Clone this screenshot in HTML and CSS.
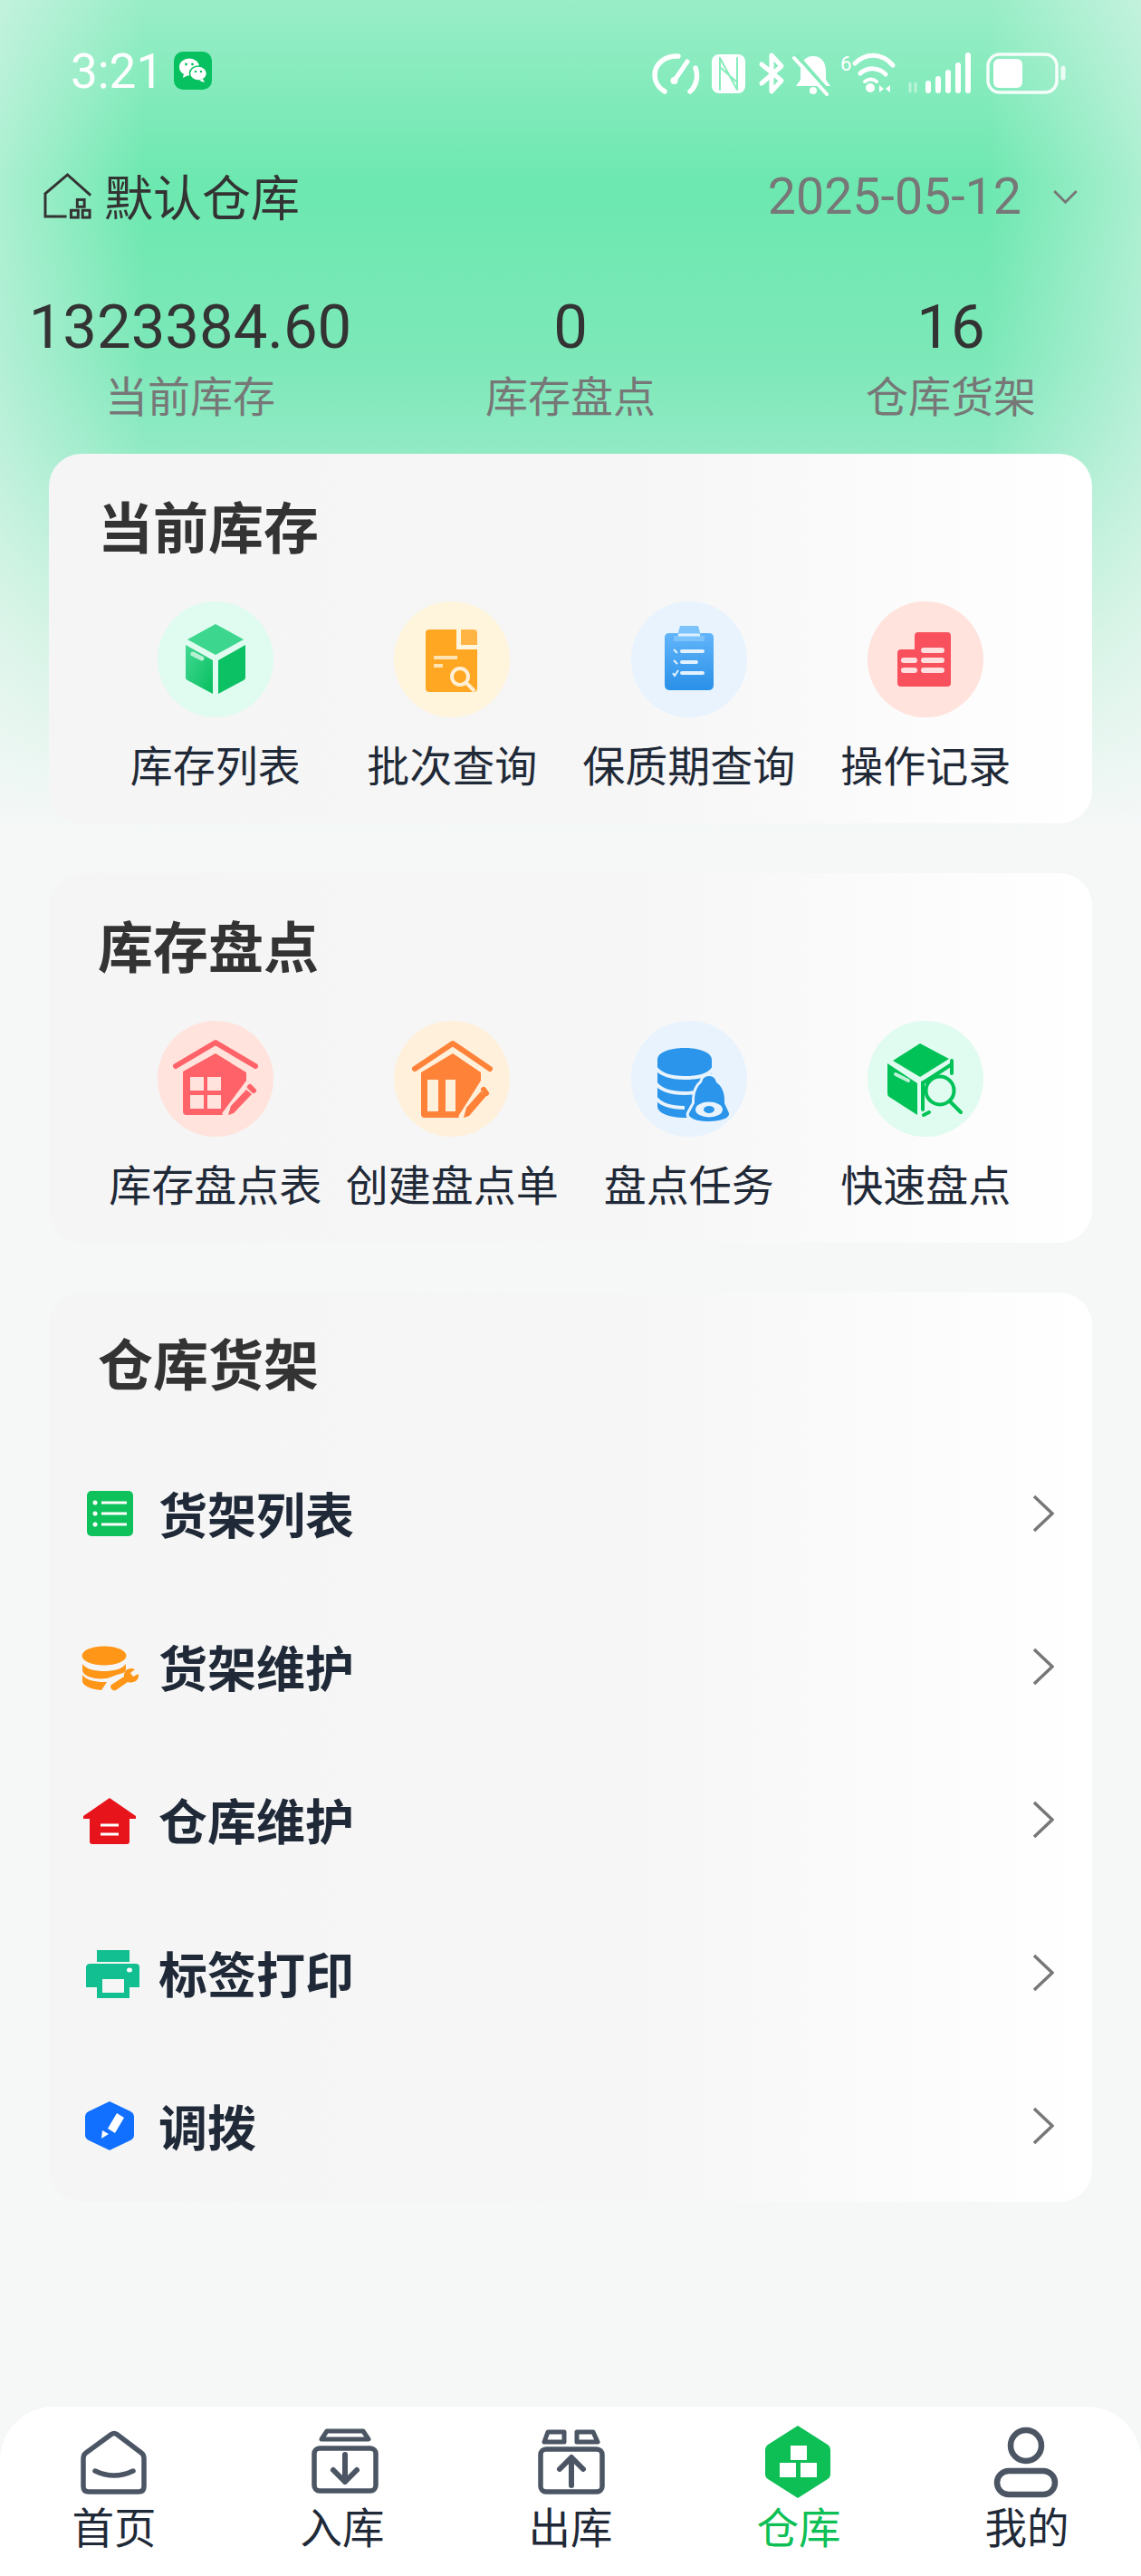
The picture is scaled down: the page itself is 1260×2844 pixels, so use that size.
FILE: index.html
```html
<!DOCTYPE html>
<html lang="zh-CN">
<head>
    <meta charset="UTF-8">
    <title>仓库</title>
    <link rel="stylesheet" href="styles.css">
</head>
<body>
<div class="page">
    <div class="status">
        <div class="status-left">
            <span class="time">3:21</span>
            <svg class="wechat" viewBox="0 0 42 42">
                <rect width="42" height="42" rx="10" fill="#07c160"/>
                <ellipse cx="17" cy="17" rx="11" ry="9.5" fill="#fff"/>
                <path d="M11 24l-1 5 6-3z" fill="#fff"/>
                <ellipse cx="27" cy="24" rx="9.5" ry="8" fill="#fff" stroke="#07c160" stroke-width="1.5"/>
                <path d="M32 30l2 4-6-2z" fill="#fff"/>
                <circle cx="13.5" cy="14" r="1.4" fill="#07c160"/><circle cx="20.5" cy="14" r="1.4" fill="#07c160"/>
                <circle cx="24" cy="22" r="1.2" fill="#07c160"/><circle cx="30" cy="22" r="1.2" fill="#07c160"/>
            </svg>
        </div>
        <svg class="status-icons" viewBox="0 0 460 50" fill="none" stroke="#fff" stroke-linecap="round" stroke-linejoin="round">
            <path d="M14 45C7 41 3 34 3 27 3 15 14 5 29 6M48 19c3 8 2 19-6 26" stroke-width="5.5"/>
            <path d="M39 12L26 31" stroke-width="5"/><circle cx="24.5" cy="33" r="4" fill="#fff" stroke="none"/>
            <rect x="66" y="4" width="37" height="43" rx="8" fill="#fff" stroke="none"/>
            <path d="M75 8v35M75 8l19 35M94 8v35M75 18l19 17" stroke="#86ecbb" stroke-width="2"/>
            <path d="M121 15l22 18-11 12V5l11 12-22 19" stroke-width="5"/>
            <path d="M178 6c-10 0-14 8-14 16v10l-5 7h38l-5-7V22c0-8-4-16-14-16z" fill="#fff" stroke="none"/>
            <circle cx="178" cy="44" r="4" fill="#fff" stroke="none"/>
            <path d="M160 5l36 41" stroke="#82ebb9" stroke-width="4"/>
            <path d="M157 8l36 40" stroke-width="4"/>
            <text class="wifi-six" x="208" y="22">6</text>
            <path d="M224 14c12-12 30-12 42 2" stroke-width="5"/>
            <path d="M230 25c8-7 20-7 28 1" stroke-width="5"/>
            <path d="M235 34c4-3 9-3 13 0" stroke-width="4"/>
            <circle cx="241" cy="41" r="5" fill="#fff" stroke="none"/>
            <path d="M251 38l5 4-5 4zM263 38l-5 4 5 4z" fill="#fff" stroke="none"/>
            <path d="M285 36v9M291 36v9" stroke-width="3" opacity=".45"/>
            <path d="M305 36v8M316 31v13M327 24v20M338 16v28M349 5v39" stroke-width="6"/>
            <rect x="371" y="4" width="76" height="42" rx="13" stroke-width="3.5" opacity=".9"/>
            <rect x="377" y="9" width="32" height="32" rx="6" fill="#fff" stroke="none"/>
            <path d="M454 19v11" stroke-width="5" opacity=".8"/>
        </svg>
    </div>

    <div class="topbar">
        <div class="store">
            <svg class="store-icon" viewBox="0 0 58 54" fill="none" stroke="#333" stroke-width="3">
                <path d="M2 24L28 2l26 23M3 24v25h24"/>
                <rect x="39" y="30" width="8" height="8"/>
                <rect x="32" y="42" width="8" height="8"/>
                <rect x="45" y="42" width="8" height="8"/>
            </svg>
            <span class="store-name">默认仓库</span>
        </div>
        <div class="date">
            <span>2025-05-12</span>
            <svg class="date-arrow" viewBox="0 0 30 18" fill="none" stroke="#777" stroke-width="3"><path d="M2 2l13 13L28 2"/></svg>
        </div>
    </div>

    <div class="stats">
        <div class="stat"><div class="stat-num">1323384.60</div><div class="stat-label">当前库存</div></div>
        <div class="stat"><div class="stat-num">0</div><div class="stat-label">库存盘点</div></div>
        <div class="stat"><div class="stat-num">16</div><div class="stat-label">仓库货架</div></div>
    </div>

    <div class="cards">
        <section class="card">
            <h2 class="card-title">当前库存</h2>
            <div class="grid">
                <div class="tile">
                    <div class="circle c-green">
                        <svg viewBox="0 2 128 128">
                            <defs>
                                <linearGradient id="gbox" x1="0" y1="0" x2="1" y2="1"><stop offset="0" stop-color="#43d893"/><stop offset="1" stop-color="#06bf5e"/></linearGradient>
                            </defs>
                            <path d="M64 27l31 17-31 17-31-17z" fill="#3dd68e"/>
                            <path d="M31 50l30 17v37L33 89q-2-1-2-3z" fill="url(#gbox)"/>
                            <path d="M97 50L67 67v37l28-15q2-1 2-3z" fill="#0bc163"/>
                            <path d="M39 60l10 5" stroke="#b9f0d3" stroke-width="5" stroke-linecap="round"/>
                        </svg>
                    </div>
                    <span class="tile-label">库存列表</span>
                </div>
                <div class="tile">
                    <div class="circle c-yellow">
                        <svg viewBox="0 2 128 128">
                            <path d="M39 33h30v22h23v43q0 4-4 4H39q-4 0-4-4V37q0-4 4-4z" fill="#ffa723"/>
                            <path d="M74 33h14q4 0 4 4v13H74z" fill="#ffb444"/>
                            <path d="M44 64h26M44 73h10" stroke="#ffe3b0" stroke-width="4"/>
                            <circle cx="73" cy="85" r="9" fill="none" stroke="#fff0d6" stroke-width="4"/>
                            <path d="M80 92l9 9" stroke="#fff0d6" stroke-width="4"/>
                        </svg>
                    </div>
                    <span class="tile-label">批次查询</span>
                </div>
                <div class="tile">
                    <div class="circle c-blue">
                        <svg viewBox="0 2 128 128">
                            <defs>
                                <linearGradient id="bclip" x1="0" y1="0" x2="0" y2="1"><stop offset="0" stop-color="#62b5fa"/><stop offset="1" stop-color="#2a90e8"/></linearGradient>
                            </defs>
                            <path d="M42 37h44q5 0 5 5v52q0 6-6 6H43q-6 0-6-6V42q0-5 5-5z" fill="url(#bclip)"/>
                            <path d="M54 29h20l3 11h4v6H47v-6h4z" fill="#7cc2fb"/>
                            <path d="M52 39h24" stroke="#dff0ff" stroke-width="3"/>
                            <path d="M56 57h23M56 69h16M56 81h23" stroke="#e4f2ff" stroke-width="4" stroke-linecap="round"/>
                            <path d="M47 55l4 4M47 67l4 4M46 81l2 3 4-6" stroke="#e4f2ff" stroke-width="2" fill="none"/>
                        </svg>
                    </div>
                    <span class="tile-label">保质期查询</span>
                </div>
                <div class="tile">
                    <div class="circle c-red">
                        <svg viewBox="0 2 128 128">
                            <path d="M56 36h32q4 0 4 4v52q0 4-4 4H37q-4 0-4-4V59q0-4 4-4h15V40q0-4 4-4z" fill="#f8505c"/>
                            <path d="M62 56h20M62 67h20M62 78h20M40 67h12M40 78h12" stroke="#ffdfe0" stroke-width="6" stroke-linecap="round"/>
                        </svg>
                    </div>
                    <span class="tile-label">操作记录</span>
                </div>
            </div>
        </section>

        <section class="card">
            <h2 class="card-title">库存盘点</h2>
            <div class="grid">
                <div class="tile">
                    <div class="circle c-red">
                        <svg viewBox="0 0 128 128">
                            <path d="M20 50L64 24l44 26" fill="none" stroke="#ff6369" stroke-width="6" stroke-linecap="round" stroke-linejoin="round"/>
                            <path d="M64 36l34 21v9L72 101q-1 2 0 3H32q-4 0-4-4V56z" fill="#ff6369"/>
                            <path d="M36 62h15v15H36zM55 62h15v15H55zM36 82h15v15H36zM55 82h15v15H55z" fill="#ffe3dc"/>
                            <path d="M78 104l3-10 17-18 6 5-20 21z" fill="#ff6369"/>
                            <path d="M102 73l4 4" stroke="#ff6369" stroke-width="6" stroke-linecap="round"/>
                        </svg>
                    </div>
                    <span class="tile-label">库存盘点表</span>
                </div>
                <div class="tile">
                    <div class="circle c-orange">
                        <svg viewBox="0 0 128 128">
                            <path d="M23 53L65 25l41 28" fill="none" stroke="#ff8239" stroke-width="6" stroke-linecap="round" stroke-linejoin="round"/>
                            <path d="M65 36l31 21v9L72 104q-1 2 0 3H34q-4 0-4-4V57z" fill="#ff8239"/>
                            <path d="M37 65h12v35H37zM57 65h11v35H57z" fill="#fff0dc"/>
                            <path d="M77 107l3-11 16-18 6 5-19 22z" fill="#ff8239"/>
                            <path d="M99 76l3 4" stroke="#ff8239" stroke-width="6" stroke-linecap="round"/>
                        </svg>
                    </div>
                    <span class="tile-label">创建盘点单</span>
                </div>
                <div class="tile">
                    <div class="circle c-blue">
                        <svg viewBox="0 0 128 128" fill="#2a95ea">
                            <path d="M29 43c0-8 13-13 30-13s30 5 30 13v64H59c-17 0-30-5-30-13z"/>
                            <path d="M27 52c7 9 20 11 32 11s27-2 32-11M27 69c7 9 20 11 32 11 6 0 12-1 16-2M27 85c7 9 20 11 32 11" fill="none" stroke="#e8f3fd" stroke-width="4"/>
                            <path d="M86 61c5 0 7 3 8 7 6 4 9 11 9 20v3l5 11c1 5-8 9-22 9s-24-4-22-9l6-11v-3c0-9 3-16 8-20 1-4 3-7 8-7z" stroke="#e8f3fd" stroke-width="6" paint-order="stroke"/>
                            <ellipse cx="86" cy="98" rx="15" ry="8.5" fill="#e8f3fd"/>
                            <ellipse cx="86" cy="98" rx="6" ry="4"/>
                        </svg>
                    </div>
                    <span class="tile-label">盘点任务</span>
                </div>
                <div class="tile">
                    <div class="circle c-green">
                        <svg viewBox="0 0 128 128">
                            <path d="M58 25l32 17-32 20-30-18z" fill="#00c257"/>
                            <path d="M22 47l33 22v35L24 84q-2-1-2-4z" fill="#00c257"/>
                            <path d="M62 68l31-20M93 44v14M61 68v30M62 104l6-3" fill="none" stroke="#00c257" stroke-width="4" stroke-linecap="round"/>
                            <path d="M31 59l14 7" stroke="#bdf2d6" stroke-width="4" stroke-linecap="round"/>
                            <circle cx="80" cy="77" r="15.5" fill="#e0fbef" stroke="#00c257" stroke-width="4"/>
                            <path d="M91 89l12 12" stroke="#00c257" stroke-width="4" stroke-linecap="round"/>
                        </svg>
                    </div>
                    <span class="tile-label">快速盘点</span>
                </div>
            </div>
        </section>

        <section class="card card-list">
            <h2 class="card-title">仓库货架</h2>
            <div class="row">
                <svg class="row-icon" viewBox="0 0 64 60">
                    <rect x="6" y="5" width="51" height="50" rx="5" fill="#0fc15a"/>
                    <path d="M22 18h28M22 30h28M22 42h28" stroke="#fff" stroke-width="3"/>
                    <circle cx="15" cy="18" r="2.5" fill="#fff"/><circle cx="15" cy="30" r="2.5" fill="#fff"/><circle cx="15" cy="42" r="2.5" fill="#fff"/>
                </svg>
                <span class="row-text">货架列表</span>
                <svg class="row-arrow" viewBox="0 0 24 42" fill="none" stroke="#777" stroke-width="3.5"><path d="M2 2l20 19L2 40"/></svg>
            </div>
            <div class="row">
                <svg class="row-icon" viewBox="0 0 64 60" fill="#ff9617">
                    <ellipse cx="25" cy="18" rx="24.5" ry="10.5"/>
                    <path d="M1 27c4 6 14 8 24 8s20-2 24-8v6c0 2-2 4-6 5-5 1-11 4-15 5-14 2-27-3-27-9z"/>
                    <path d="M1 39c4 6 14 8 24 8h3l-6 9C10 55 1 51 1 46z"/>
                    <path d="M33 50l14-9c-1-6 5-11 12-8l-5 4 3 4 6-3c1 7-5 11-12 9L38 56c-3 2-8-3-5-6z"/>
                </svg>
                <span class="row-text">货架维护</span>
                <svg class="row-arrow" viewBox="0 0 24 42" fill="none" stroke="#777" stroke-width="3.5"><path d="M2 2l20 19L2 40"/></svg>
            </div>
            <div class="row">
                <svg class="row-icon" viewBox="0 0 64 60">
                    <path d="M31 6l29 20v3H2v-3z" fill="#e8141c"/>
                    <path d="M9 27h44v27q0 3-3 3H12q-3 0-3-3z" fill="#e8141c"/>
                    <path d="M21 36h20M21 46h20" stroke="#fff" stroke-width="3"/>
                </svg>
                <span class="row-text">仓库维护</span>
                <svg class="row-arrow" viewBox="0 0 24 42" fill="none" stroke="#777" stroke-width="3.5"><path d="M2 2l20 19L2 40"/></svg>
            </div>
            <div class="row">
                <svg class="row-icon" viewBox="0 0 64 60" fill="#12bf90">
                    <path d="M17 5h36v13H17z"/>
                    <path d="M10 20h50q4 0 4 4v22H53v12H17V46H5V24q0-4 5-4z"/>
                    <rect x="23" y="37" width="24" height="15" fill="#f6f6f6"/>
                    <ellipse cx="53" cy="27" rx="3" ry="2.5" fill="#fff"/>
                </svg>
                <span class="row-text">标签打印</span>
                <svg class="row-arrow" viewBox="0 0 24 42" fill="none" stroke="#777" stroke-width="3.5"><path d="M2 2l20 19L2 40"/></svg>
            </div>
            <div class="row">
                <svg class="row-icon" viewBox="0 0 64 60">
                    <path d="M31 3l23 11q4 2 4 6v20q0 4-4 6L31 57 8 46q-4-2-4-6V20q0-4 4-6z" fill="#1170ff"/>
                    <path d="M29 33l10-17 8 5-10 17z" fill="#fff"/>
                    <path d="M23 35l7 4-8 5z" fill="#fff"/>
                </svg>
                <span class="row-text">调拨</span>
                <svg class="row-arrow" viewBox="0 0 24 42" fill="none" stroke="#777" stroke-width="3.5"><path d="M2 2l20 19L2 40"/></svg>
            </div>
        </section>
    </div>

    <nav class="nav">
        <div class="nav-item">
            <svg viewBox="0 0 80 80" fill="none" stroke="#4b5563" stroke-width="5.5">
                <path d="M37 9.5L9 30q-3 2-3 6v31q0 6 6 6h55q6 0 6-6V36q0-4-3-6L43 9.5q-3-2-6 0z"/>
                <path d="M19 50q21 10 42 0" stroke-linecap="round"/>
            </svg>
            <span>首页</span>
        </div>
        <div class="nav-item">
            <svg viewBox="0 0 80 80" fill="none" stroke="#4b5563" stroke-width="5" stroke-linecap="round" stroke-linejoin="round">
                <path d="M23 6h40l6 9H17z"/>
                <rect x="9" y="25" width="68" height="47" rx="6" stroke-width="5.5"/>
                <path d="M43 32v30M30 49l13 13 13-13" stroke-width="6"/>
            </svg>
            <span>入库</span>
        </div>
        <div class="nav-item">
            <svg viewBox="0 0 80 80" fill="none" stroke="#4b5563" stroke-width="5" stroke-linecap="round" stroke-linejoin="round">
                <path d="M15 7h18v11H11zM47 7h18l5 11H47z"/>
                <rect x="7" y="26" width="68" height="47" rx="6" stroke-width="5.5"/>
                <path d="M41 66V36M28 48l13-13 13 13" stroke-width="6"/>
            </svg>
            <span>出库</span>
        </div>
        <div class="nav-item active">
            <svg viewBox="0 0 80 80">
                <path d="M39 0l33 21q3 2 3 5v28q0 3-3 5L39 80 6 59q-3-2-3-5V26q0-3 3-5z" fill="#0dbf55"/>
                <path d="M31 22h18v16H31zM19 41h18v16H19zM42 41h18v16H42z" fill="#fff"/>
            </svg>
            <span>仓库</span>
        </div>
        <div class="nav-item">
            <svg viewBox="0 0 80 80" fill="none" stroke="#4b5563" stroke-width="6.5">
                <circle cx="39" cy="22" r="17"/>
                <rect x="7" y="50" width="64" height="26" rx="13"/>
            </svg>
            <span>我的</span>
        </div>
    </nav>
</div>
</body>
</html>
```
FILE: styles.css
```css
* {
    box-sizing: border-box;
}
body {
    margin: 0;
    font-family: "Noto Sans CJK SC", "Noto Sans", sans-serif;
}
.page {
    width: 1260px;
    height: 2844px;
    overflow: hidden;
    display: flex;
    flex-direction: column;
    background-color: #f6f8f8;
    background-image:
        linear-gradient(90deg, rgba(246, 248, 248, .45) 0, rgba(246, 248, 248, 0) 160px, rgba(246, 248, 248, 0) 1090px, rgba(246, 248, 248, .45) 100%),
        linear-gradient(180deg, rgba(246, 248, 248, .32) 0, rgba(246, 248, 248, 0) 200px),
        linear-gradient(180deg, #6de8b0 0, #6de8b0 220px, #7de8b9 400px, #8feac3 490px, #c8f2de 700px, #f6f8f8 920px);
    background-repeat: no-repeat;
    background-size: 100% 940px;
}

/* status bar */
.status {
    height: 156px;
    padding: 0 80px 0 78px;
    display: flex;
    align-items: center;
    justify-content: space-between;
}
.status-left {
    display: flex;
    align-items: center;
    gap: 12px;
}
.time {
    padding-top: 2px;
    font-family: Roboto, sans-serif;
    font-size: 53px;
    color: #fff;
}
.wechat {
    width: 42px;
    height: 42px;
}
.status-icons {
    width: 460px;
    height: 50px;
    margin-top: 6px;
}
.wifi-six {
    font-family: Roboto, sans-serif;
    font-size: 22px;
    fill: #fff;
    stroke: none;
}

/* warehouse and date */
.topbar {
    height: 122px;
    padding: 0 69px 0 47px;
    display: flex;
    align-items: center;
    justify-content: space-between;
}
.store {
    display: flex;
    align-items: center;
    gap: 11px;
    font-size: 54px;
    color: #333;
}
.store-name {
    margin-bottom: 4px;
}
.store-icon {
    width: 57px;
    height: 53px;
}
.date {
    display: flex;
    align-items: center;
    gap: 34px;
    font-family: Roboto, sans-serif;
    font-size: 55.5px;
    color: #777;
}
.date-arrow {
    width: 29px;
    height: 17px;
}

.stats {
    padding-top: 43px;
    display: grid;
    grid-template-columns: repeat(3, 1fr);
    text-align: center;
}
.stat-num {
    font-family: Roboto, sans-serif;
    font-size: 67px;
    line-height: 80px;
    color: #333;
}
.stat-label {
    margin-top: 6px;
    font-size: 47px;
    line-height: 56px;
    color: #777;
}

/* cards */
.cards {
    margin: 38px 54px 0;
    display: flex;
    flex-direction: column;
    gap: 55px;
}
.card {
    height: 408px;
    padding-top: 39px;
    border-radius: 36px;
    background: linear-gradient(90deg, #f5f5f5 0, #f6f6f6 55%, #fff 100%);
}
.card-title {
    margin: 0;
    padding-left: 54px;
    font-size: 61px;
    line-height: 80px;
    font-weight: 700;
    color: #333;
}
.grid {
    margin-top: 44px;
    padding: 0 53px;
    display: grid;
    grid-template-columns: repeat(4, 1fr);
}
.tile {
    display: flex;
    flex-direction: column;
    align-items: center;
}
.tile-label {
    margin-top: 16px;
    font-size: 47px;
    line-height: 70px;
    color: #1f2937;
    white-space: nowrap;
}
.circle {
    width: 128px;
    height: 128px;
    border-radius: 50%;
}
.circle svg {
    display: block;
    width: 128px;
    height: 128px;
}
.c-green { background: #e0fbef; }
.c-yellow { background: #fff5dc; }
.c-blue { background: #e8f3fd; }
.c-red { background: #ffe3dc; }
.c-orange { background: #fff0dc; }

.card-list {
    height: auto;
    padding-top: 37px;
}
.card-list .card-title {
    margin-bottom: 42px;
}
.row {
    height: 169px;
    padding: 0 42px 0 36px;
    display: flex;
    align-items: center;
}
.row-icon {
    width: 64px;
    height: 60px;
    flex: none;
}
.row-text {
    flex: 1;
    margin-left: 21px;
    padding-bottom: 1px;
    font-size: 54px;
    font-weight: 700;
    color: #1f2937;
}
.row-arrow {
    width: 24px;
    height: 42px;
}

/* bottom tabs */
.nav {
    margin-top: auto;
    height: 187px;
    padding-top: 21px;
    border-radius: 60px 60px 0 0;
    background: #fff;
    display: grid;
    grid-template-columns: repeat(5, 1fr);
}
.nav-item {
    display: flex;
    flex-direction: column;
    align-items: center;
    font-size: 46.5px;
    line-height: 60px;
    color: #1f2937;
}
.nav-item svg {
    display: block;
    width: 80px;
    height: 80px;
}
.nav-item.active {
    color: #0dbf55;
}
```
